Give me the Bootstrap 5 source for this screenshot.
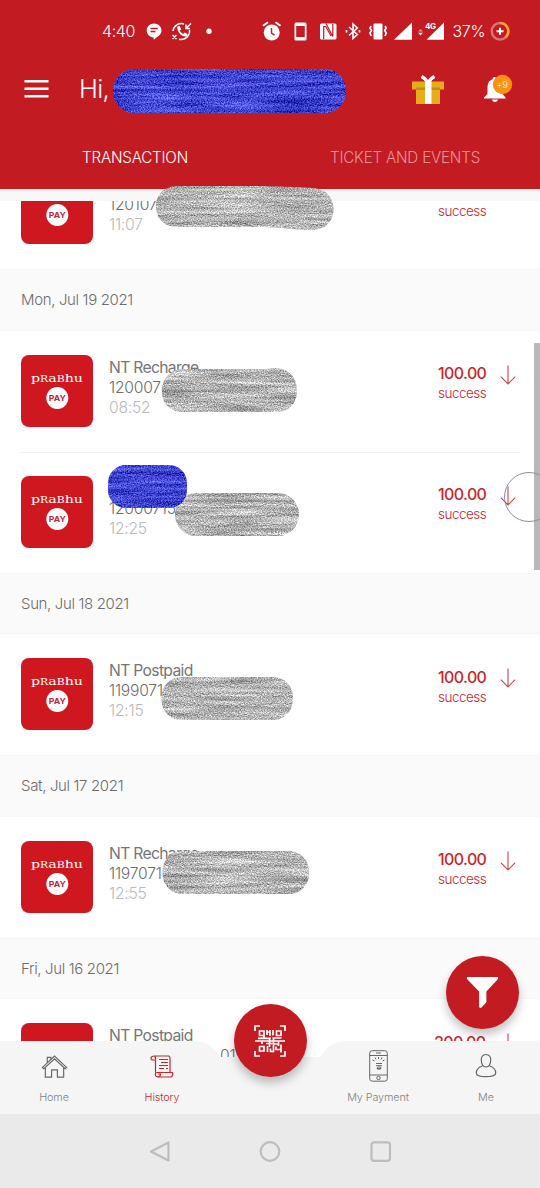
<!DOCTYPE html>
<html lang="en">
<head>
<meta charset="utf-8">
<meta name="viewport" content="width=device-width, initial-scale=1">
<title>Prabhu Pay - History</title>
<link href="https://cdn.jsdelivr.net/npm/bootstrap@5.3.0/dist/css/bootstrap.min.css" rel="stylesheet">
<style>
body{margin:0;background:#fff;font-family:Inter,"Liberation Sans",sans-serif;font-weight:300;color:#6c6c6c}
svg{display:block;flex:none}
.phone{width:540px;height:1188px}
.topbar{height:189px;background:#c31b22;color:#fff}
.status{height:62px;padding:0 30px 0 102px;font-size:16px;letter-spacing:-.4px}
.icons{left:140px;top:20px}
.greet{height:56px;padding:0 27px 0 24px;margin-top:-1px;font-size:25.5px;letter-spacing:-.7px}
.tabs{font-size:15.2px;letter-spacing:-.2px;height:80px}
.tabs>div{width:50%;line-height:81px;text-align:center}
.tabs .off{color:#e79599}
.strip{height:12px;background:linear-gradient(#ececec,#f8f8f8 4px)}
.feed{height:857px}
.feed-in{margin-top:-53px}
.entry{height:121px;padding:24px 24px 0 21px;background:#fff}
.entry+.entry{background:linear-gradient(#f3f3f3,#f3f3f3) 20px 0/500px 1px no-repeat #fff}
.day{height:61.5px;line-height:60px;padding-left:21px;font-size:15px;letter-spacing:-.35px;background:#fafafa;border-top:1px solid #f5f5f5;border-bottom:1px solid #f6f6f6;color:#6c6c6c}
.info{margin-left:16px;font-size:15.7px;line-height:20px;letter-spacing:-.25px;padding-top:3px}
.info .when{color:#b9b9b9}
.title{font-weight:400;color:#757575;letter-spacing:-.68px}
.paid{color:#c8262d;width:49px;margin-right:13px;padding-top:8.5px;line-height:20px;font-size:13.5px;letter-spacing:-.5px;white-space:nowrap}
.paid .amt{font-size:16px;font-weight:500;letter-spacing:-.6px}
.paid.bare{margin-right:29px}
.arrow{margin-top:10px}
.dock{bottom:74px;left:0;width:540px;height:110px}
.dock-items{position:absolute;left:0;right:0;bottom:1px;height:73px}
.dock-items>div{width:108px;font-size:10.8px;letter-spacing:-.1px;color:#808080}
.dock-items .ico{height:50px;padding-top:2px}
.dock-items .on{color:#c8262d}
.fab{width:73px;height:73px;background:#c31b22;box-shadow:0 6px 10px rgba(0,0,0,.24)}
.scan{left:233.5px;top:0}
.sift{left:446px;top:955.5px}
.sysbar{height:74px;background:#eaeaea}
.thumb{right:0;top:343px;width:6px;height:227px;background:#b8b8b8}
.over{left:0;top:0}
</style>
</head>
<body>
<svg class="position-absolute" width="0" height="0">
<defs>
<symbol id="logo" viewBox="0 0 72 72"><rect width="72" height="72" rx="8" fill="#cf171f"/>
<text x="10" y="27" fill="#fff" font-family="DejaVu Serif,serif" font-size="11" font-weight="400" textLength="52" lengthAdjust="spacingAndGlyphs">p<tspan font-size="8.4">R</tspan>a<tspan font-size="8.4">B</tspan>hu</text>
<circle cx="36.3" cy="43" r="11" fill="#fff"/><text x="36.3" y="46" text-anchor="middle" fill="#bf2736" font-family="Inter,sans-serif" font-size="8" font-weight="700" textLength="17" lengthAdjust="spacingAndGlyphs">PAY</text></symbol>
<symbol id="down" viewBox="0 0 16 20"><path d="M8 .5V19M.8 11.700 8 19l7.200-7.300" fill="none" stroke="#c9474c" stroke-width="1.100"/></symbol>
<filter id="gray" x="-2%" y="-3%" width="104%" height="106%" color-interpolation-filters="sRGB">
<feTurbulence type="fractalNoise" baseFrequency=".015 .28" numOctaves="2" seed="4"/>
<feColorMatrix values="1 0 0 0 0  1 0 0 0 0  1 0 0 0 0  0 0 0 0 1" result="streaks"/>
<feTurbulence type="fractalNoise" baseFrequency=".7 .9" numOctaves="2" seed="7"/>
<feColorMatrix values="1 0 0 0 0  1 0 0 0 0  1 0 0 0 0  0 0 0 0 1" result="grain"/>
<feComposite in="streaks" in2="grain" operator="arithmetic" k1="0" k2=".5" k3=".8" k4=".06"/>
<feComposite in2="SourceAlpha" operator="in"/></filter>
<filter id="blue" x="-2%" y="-3%" width="104%" height="106%" color-interpolation-filters="sRGB">
<feTurbulence type="fractalNoise" baseFrequency=".015 .28" numOctaves="2" seed="9"/>
<feColorMatrix values="1 0 0 0 0  1 0 0 0 0  1 0 0 0 0  0 0 0 0 1" result="streaks"/>
<feTurbulence type="fractalNoise" baseFrequency=".7 .9" numOctaves="2" seed="3"/>
<feColorMatrix values="1 0 0 0 0  1 0 0 0 0  1 0 0 0 0  0 0 0 0 1" result="grain"/>
<feComposite in="streaks" in2="grain" operator="arithmetic" k1="0" k2=".45" k3=".7" k4="-.07"/>
<feColorMatrix values="1 0 0 0 -.25  1 0 0 0 -.23  1 0 0 0 .31  0 0 0 0 1"/>
<feComposite in2="SourceAlpha" operator="in"/></filter>
</defs>
</svg>

<div class="phone position-relative overflow-hidden d-flex flex-column">
<header class="topbar flex-shrink-0">
  <div class="status d-flex align-items-center">
    <span>4:40</span>
    <svg class="icons position-absolute" width="380" height="24" viewBox="0 0 380 24" fill="#fff">
      <path d="M14 3.500c4.300 0 7.500 3 7.500 6.800 0 4.200-3.500 6.300-6 8l-1.800 1.600v-2.400C9.500 17.200 6.700 14 6.700 10.300 6.700 6.500 10 3.500 14 3.500z"/>
      <path d="M10.500 8.500h7.300M10.500 11.500h5" stroke="#c31b22" stroke-width="1.400"/>
      <g fill="none" stroke="#fff" stroke-width="1.500"><path d="M33 11a8.500 8.500 0 0 1 11-7M49.500 10a8.500 8.500 0 0 1-10.500 9.300M51 3.500l-4.700 4.500M46 4.500v4h4M32.500 15l4 4M36.500 15l-4 4"/></g>
      <path d="M37.300 6.500 39.500 6l1.700 3.200-1.500 1.400c.8 1.800 2 2.700 3.500 3.300l1.600-1.500 2.700 1.500-.5 2.500c-5.500.8-10-4-9.700-9.900z"/>
      <circle cx="69" cy="11.300" r="2.700"/>
      <circle cx="131.700" cy="12.500" r="8"/><path d="m123 5.800 5-3.500M140.500 5.800l-5-3.500" stroke="#fff" stroke-width="2"/><path d="M131.500 8v5.200l3 2" fill="none" stroke="#c31b22" stroke-width="1.400"/>
      <path d="M156 2.500h9a1.500 1.500 0 0 1 1.500 1.500v15a1.500 1.500 0 0 1-1.500 1.500h-9a1.500 1.500 0 0 1-1.500-1.500V4a1.500 1.500 0 0 1 1.500-1.500zM156.200 6v11h8.600V6z" fill-rule="evenodd"/>
      <rect x="180" y="3.500" width="16.500" height="16" rx="1.500"/><path d="M183.700 19V6.500h2l5.300 9.500M186 3.500l6.800 13V4" fill="none" stroke="#c31b22" stroke-width="1.200"/>
      <path d="m209 7 8.300 7.500-4.300 4V4l4.300 4-8.300 7.500M206.500 10v2.500M219.500 10v2.500" fill="none" stroke="#fff" stroke-width="1.600"/>
      <rect x="233.500" y="3.500" width="9" height="16" rx="1"/><path d="m231.200 6-1.200 2 1.500 2.500-1.500 2.500 1.200 3M245 6l1.200 2-1.500 2.500 1.500 2.500L245 16" fill="none" stroke="#fff" stroke-width="1.700"/>
      <path d="M272 2.500v17.300h-18zM304 2.500v17.300h-17.500z"/><path d="m278 11.500 2.500-2.500 2.500 2.500z" opacity=".5"/><path d="m278 12.800h5l-2.500 2.700z"/>
      <text x="285" y="8.500" font-family="Inter,sans-serif" font-size="8" font-weight="700" letter-spacing="-.3" stroke="#c31b22" stroke-width="2" paint-order="stroke">4G</text>
      <circle cx="360" cy="11.300" r="8.300" fill="none" stroke="#db7476" stroke-width="2.400"/><path d="M360 3a8.300 8.300 0 0 1 5.500 14.500" fill="none" stroke="#f2a426" stroke-width="2.400"/><path d="M356.500 11.300h7M360 7.800v7" stroke="#fff" stroke-width="1.900"/>
    </svg>
    <span class="ms-auto" style="margin-right:25px">37%</span>
  </div>
  <div class="greet d-flex align-items-center">
    <svg width="25" height="20" viewBox="0 0 25 20"><path d="M.5 2.300h24M.5 9.800h24M.5 17.300h24" stroke="#fff" stroke-width="2.600"/></svg>
    <span style="margin-left:30px">Hi,</span>
    <svg class="ms-auto" width="34" height="32" viewBox="0 -1 34 32"><path fill="#e7ad19" d="M1 7.500h32v8H1zM5 15h24v15H5z"/><path fill="#c28a1c" d="M5 13.500h24v2.500H5z"/><path fill="#fff" d="M14 7.500h6.500V30H14z"/><path d="M17 9c-1.500-3-3.300-5-6.500-6.500M17 9c1.500-3 3.300-5 6.500-6.500" stroke="#fff" stroke-width="3.200" fill="none"/></svg>
    <svg style="margin-left:38px" width="30" height="32" viewBox="0 0 30 32"><path fill="#fff" d="M11.500 4c1.300 0 2 1 2 2.200 4.200 1 6 4.300 6 8.800v6l3 3.500v1H1v-1L4.500 21v-6c0-4.500 1.500-7.700 5.200-8.800 0-1.200.5-2.200 1.800-2.200zM9 26.500h6c-.3 1.600-1.400 2.500-3 2.500s-2.700-.9-3-2.500z"/><circle cx="19.500" cy="11.500" r="9.700" fill="#f7930e"/><text x="19" y="15" text-anchor="middle" fill="#fff" font-size="9.500" font-family="Inter,sans-serif" letter-spacing="-.5">+9</text></svg>
  </div>
  <div class="tabs d-flex"><div>TRANSACTION</div><div class="off">TICKET AND EVENTS</div></div>
</header>
<div class="strip flex-shrink-0"></div>
<main class="feed overflow-hidden flex-shrink-0">
 <div class="feed-in">
  <div class="entry d-flex"><svg width="72" height="72"><use href="#logo"/></svg><div class="info flex-grow-1"><div class="title">&nbsp;</div><div>120107</div><div class="when">11:07</div></div><div class="paid bare"><div class="amt">&nbsp;</div><div>success</div></div></div>
  <div class="day">Mon, Jul 19 2021</div>
  <div class="entry d-flex"><svg width="72" height="72"><use href="#logo"/></svg><div class="info flex-grow-1"><div class="title">NT Recharge</div><div>120007</div><div class="when">08:52</div></div><div class="paid"><div class="amt">100.00</div><div>success</div></div><svg class="arrow" width="16" height="20"><use href="#down"/></svg></div>
  <div class="entry d-flex"><svg width="72" height="72"><use href="#logo"/></svg><div class="info flex-grow-1"><div class="title">&nbsp;</div><div>12000715</div><div class="when">12:25</div></div><div class="paid"><div class="amt">100.00</div><div>success</div></div><svg class="arrow" width="16" height="20"><use href="#down"/></svg></div>
  <div class="day">Sun, Jul 18 2021</div>
  <div class="entry d-flex"><svg width="72" height="72"><use href="#logo"/></svg><div class="info flex-grow-1"><div class="title">NT Postpaid</div><div>1199071</div><div class="when">12:15</div></div><div class="paid"><div class="amt">100.00</div><div>success</div></div><svg class="arrow" width="16" height="20"><use href="#down"/></svg></div>
  <div class="day">Sat, Jul 17 2021</div>
  <div class="entry d-flex"><svg width="72" height="72"><use href="#logo"/></svg><div class="info flex-grow-1"><div class="title">NT Recharge</div><div>1197071</div><div class="when">12:55</div></div><div class="paid"><div class="amt">100.00</div><div>success</div></div><svg class="arrow" width="16" height="20"><use href="#down"/></svg></div>
  <div class="day">Fri, Jul 16 2021</div>
  <div class="entry d-flex"><svg width="72" height="72"><use href="#logo"/></svg><div class="info flex-grow-1"><div class="title">NT Postpaid</div><div style="padding-left:111px">01</div></div><div class="paid"><div class="amt" style="margin-left:-4px">200.00</div></div><svg class="arrow" width="16" height="20"><use href="#down"/></svg></div>
 </div>
</main>
<nav class="dock position-absolute">
  <svg width="540" height="110" viewBox="0 0 540 110"><path fill="#f5f5f5" d="M0 37h192c14 0 22 6 28 16h100c6-10 14-16 28-16h192v73H0z"/></svg>
  <div class="dock-items d-flex text-center">
    <div><div class="ico d-flex align-items-center justify-content-center"><svg width="27" height="26" viewBox="0 -1 28 26" fill="none" stroke="#666" stroke-width="1.200"><path d="m1.500 13.500 1.500 1.300L14 4.500l11 10.300 1.500-1.300L14 1.700zM4.500 14v9.500H11V16h6v7.500h6.500V14M6.500 8.500V3h3.700v2"/></svg></div>Home</div>
    <div class="on"><div class="ico d-flex align-items-center justify-content-center"><svg width="24" height="25" viewBox="0 0 24 25" fill="none" stroke="#c8262d" stroke-width="1.200"><path d="M4 2h14.500c1.500 0 1.500 1.500 1.500 3v13.500M4 2C.8 2-.3 6 3 6h2.500V4.500C5.500 3 5 2 4 2zM5.500 6v12.500M7 18.500h15.500c.8 2-.2 4.500-2 4.500H8c-3.200 0-3.500-4.500-1-4.500zM7 23c2.500 0 3.500-1.500 3.500-3H8M9 5.500h9M11 8.500h7M9 11.500h9M9 14.500h5M16 14.500h2"/></svg></div>History</div>
    <div></div>
    <div><div class="ico d-flex align-items-center justify-content-center"><svg width="19" height="32" viewBox="0 0 19 32" fill="none" stroke="#666" stroke-width="1"><rect x=".7" y=".7" width="17.600" height="30.500" rx="2.500"/><path d="M.7 5.500h17.600M.7 25h17.600M7 3h5M7 13.500h6M7 15.700h6M8 18.500h4c.5-2-3.500-2-4-.5s3 1.500 4 .5M3.500 10l2 1M6 7.500l1 2M9.500 7v2M13 7.500l-1 2M15.500 10l-2 1"/><circle cx="9.500" cy="28" r="1.700"/></svg></div>My Payment</div>
    <div><div class="ico d-flex align-items-center justify-content-center"><svg width="22" height="26" viewBox="0 0 22 26" fill="none" stroke="#666" stroke-width="1.200"><path d="M11 1.500c3.500 0 5 2.700 4.700 6-.3 3.700-2 6.500-4.700 6.500s-4.400-2.800-4.700-6.500c-.3-3.300 1.200-6 4.700-6zM7.300 13c-3 1-6 3.500-6 7 0 2.300 4.500 3.700 9.700 3.700s9.700-1.400 9.700-3.700c0-3.500-3-6-6-7"/></svg></div>Me</div>
  </div>
  <div class="fab scan rounded-circle position-absolute d-flex align-items-center justify-content-center"><svg width="32" height="32" viewBox="0 0 32 32" fill="none" stroke="#fff" stroke-width="1.700"><path d="M1 6V1h5M26 1h5v5M31 26v5h-5M6 31h-5v-5M5.500 6h4.500v4.500H5.500zM22.500 6H27v4.500h-4.500zM5.500 21.500H10V26H5.500zM13 5v5M13 7h3M16 5v6M19 5v5.500M4 13.300h13M18.500 13h9M1 16h30M8 16v3M12 18.500h6.500M15.500 13v9M19.500 13v6h5M24.500 16v5M13.500 21v6M16.500 23.500v3h3V20M22 21.500v3h5M27 19.500v8M10 10.500v3"/></svg></div>
</nav>
<div class="sysbar position-absolute bottom-0 w-100 d-flex justify-content-center align-items-center">
  <svg width="260" height="26" viewBox="0 0 260 26" fill="none" stroke="#bdbdbd" stroke-width="2.200" stroke-linejoin="round"><path d="M28.500 4.500v18L11 13.500z"/><circle cx="130" cy="13.500" r="9.300"/><rect x="231.500" y="4.300" width="18.500" height="18.500" rx="2.500"/></svg>
</div>
<div class="thumb position-absolute"></div>
<div class="fab sift rounded-circle position-absolute d-flex align-items-center justify-content-center"><svg width="33" height="33" viewBox="0 0 34 34" fill="#fff"><path d="M2 1h30c1.500 0 1.500 1.500.5 2.500L21 16v11l-5 5.500c-1 .7-2.500.3-2.500-.8V16L1.500 3.500C.5 2.500.5 1 2 1z"/></svg></div>
<svg class="over position-absolute" width="540" height="1188" viewBox="0 0 540 1188">
  <rect x="113" y="69" width="233" height="44" rx="21" filter="url(#blue)"/>
  <path d="M176 186h90c25 1 35 1 47 2 27 1 28 41 0 42-22 0-32-3-52-3h-85c-26-1-28-39 0-41z" filter="url(#gray)"/>
  <path d="M182 369h84c12-3 31 0 31 22 0 12-8 21-20 21h-95c-27-1-27-41 0-43z" filter="url(#gray)"/>
  <rect x="175" y="493" width="124" height="43" rx="21" filter="url(#gray)"/>
  <rect x="108" y="465" width="79" height="43" rx="18" filter="url(#blue)"/>
  <rect x="161.500" y="677" width="131.500" height="43" rx="20" filter="url(#gray)"/>
  <rect x="162.500" y="851" width="146.500" height="43" rx="20" filter="url(#gray)"/>
  <circle cx="529" cy="497" r="24.500" fill="none" stroke="#8d8ba3" stroke-width="1"/>
</svg>
</div>
<script src="https://cdn.jsdelivr.net/npm/bootstrap@5.3.0/dist/js/bootstrap.bundle.min.js"></script>
</body>
</html>
